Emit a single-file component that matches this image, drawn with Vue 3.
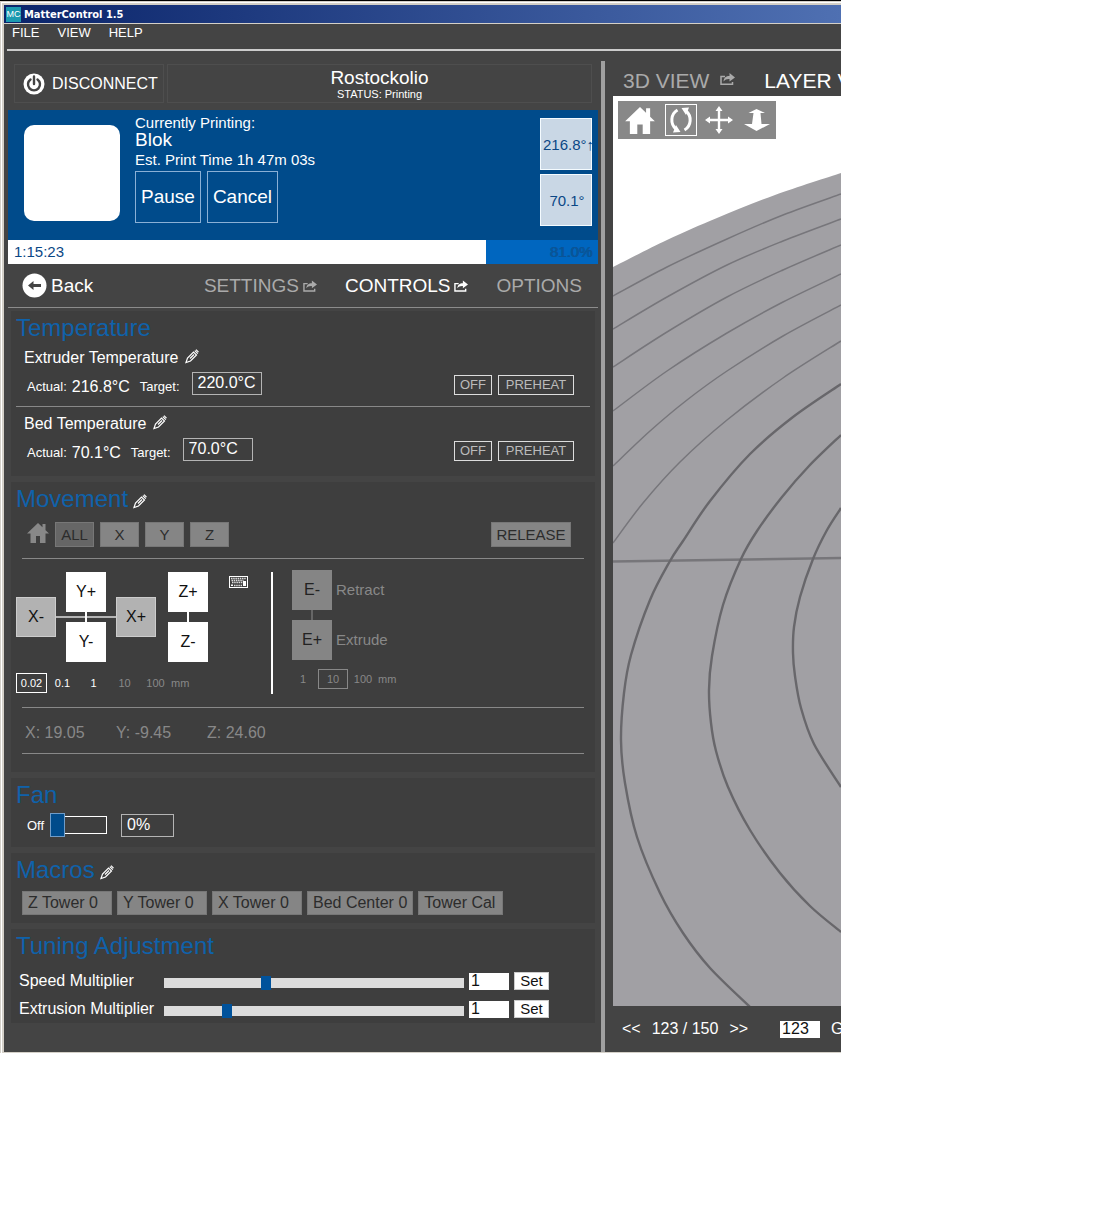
<script setup>
import { ref } from 'vue'

const temperatures = [
  { id: 'extruder', name: 'Extruder Temperature', actual: '216.8°C', target: '220.0°C' },
  { id: 'bed', name: 'Bed Temperature', actual: '70.1°C', target: '70.0°C' },
]
const axes = ['X', 'Y', 'Z']
const steps = [
  { label: '0.02' },
  { label: '0.1' },
  { label: '1' },
  { label: '10', disabled: true },
  { label: '100', disabled: true },
]
const step = ref('0.02')
const extrudeSteps = ['1', '10', '100']
const extrudeStep = ref('10')
const macros = ['Z Tower 0', 'Y Tower 0', 'X Tower 0', 'Bed Center 0', 'Tower Cal']
const tuning = ref([
  { id: 'speed', name: 'Speed Multiplier', position: 100, max: 300, value: '1' },
  { id: 'extrusion', name: 'Extrusion Multiplier', position: 60, max: 300, value: '1' },
])
const progress = 81

// Catmull-Rom curve through the given points
function smooth(points) {
  let d = `M${points[0][0]} ${points[0][1]}`
  for (let i = 0; i < points.length - 1; i++) {
    const p0 = points[i - 1] || points[i]
    const p1 = points[i]
    const p2 = points[i + 1]
    const p3 = points[i + 2] || p2
    const c1 = [p1[0] + (p2[0] - p0[0]) / 6, p1[1] + (p2[1] - p0[1]) / 6]
    const c2 = [p2[0] - (p3[0] - p1[0]) / 6, p2[1] - (p3[1] - p1[1]) / 6]
    d += `C${c1.join(' ')} ${c2.join(' ')} ${p2.join(' ')}`
  }
  return d
}

const bed = smooth([[0, 171], [54, 144], [104, 122], [162, 99], [228, 77]]) + 'V911H0Z'
const farRings = [
  [[0, 200], [54, 171], [114, 143], [170, 119], [228, 98]],
  [[0, 233], [54, 201], [114, 169], [170, 145], [228, 123]],
  [[0, 271], [54, 236], [114, 201], [170, 174], [228, 149]],
  [[0, 315], [54, 275], [114, 237], [170, 206], [228, 178]],
  [[0, 370], [37, 335], [74, 304], [114, 275], [170, 240], [228, 209]],
  [[0, 447], [30, 407], [67, 366], [114, 324], [170, 282], [228, 245]],
].map(smooth)
const nearRings = [
  [[228, 288], [180, 321], [137, 358], [97, 405], [70, 445], [57, 465], [37, 504], [18, 559], [11, 597], [8, 644], [12, 687], [24, 741], [47, 797], [70, 837], [97, 872], [137, 911]],
  [[228, 339], [196, 370], [169, 401], [144, 435], [128, 463], [110, 509], [99, 560], [96, 594], [98, 627], [103, 655], [115, 691], [137, 734], [167, 777], [197, 810], [228, 836]],
  [[228, 412], [214, 434], [200, 463], [187, 501], [181, 531], [180, 557], [182, 580], [188, 612], [201, 648], [228, 691]],
].map(smooth)

const pencilPath = 'M1 13.500L2.500 9L8.500 3L11.500 6L5.500 12ZM5 9.500L9 5.500M9.800 1.700L12.800 4.700M11 0.700L13.500 3.200'
const sharePath = 'M5 3.500H1V11.300H12.500V9'
const shareArrow = 'M3.500 8.500C4 4.500 6 3 9.500 3V0L15 4.500L9.500 8.500V6C7 5.800 5 6.500 3.500 8.500Z'
const homePath = 'M11 0L22 10.500H18.500V20H13V13H9V20H3.500V10.500H0ZM15.500 1H18.500V8L15.500 5Z'
</script>

<template>
  <div class="window">
    <header class="titlebar">
      <span class="logo">MC</span>
      <span>MatterControl 1.5</span>
    </header>
    <div class="client">
      <nav class="menu">
        <a href="#">FILE</a>
        <a href="#">VIEW</a>
        <a href="#">HELP</a>
      </nav>
      <div class="panes">
        <main class="left">
          <div class="connection">
            <button class="disconnect" type="button">
              <svg width="22" height="22" viewBox="0 0 22 22">
                <circle cx="11" cy="11" r="10.500" fill="#fff" />
                <path d="M7.500 6.500a6 6 0 1 0 7 0M11 3.500V11" fill="none" stroke="#444" stroke-width="2.400" stroke-linecap="round" />
              </svg>
              DISCONNECT
            </button>
            <div class="status">
              <div class="printer">Rostockolio</div>
              <div class="state">STATUS: Printing</div>
            </div>
          </div>

          <section class="job">
            <div class="thumb"></div>
            <div class="info">
              <div class="caption">Currently Printing:</div>
              <div class="part">Blok</div>
              <div class="estimate">Est. Print Time 1h 47m 03s</div>
              <div class="job-actions">
                <button type="button">Pause</button>
                <button type="button">Cancel</button>
              </div>
            </div>
            <div class="gauges">
              <button type="button">216.8°↑</button>
              <button type="button">70.1°</button>
            </div>
          </section>
          <div class="progress" role="progressbar" :aria-valuenow="progress" aria-valuemin="0" aria-valuemax="100">
            <div class="done" :style="{ width: progress + '%' }">1:15:23</div>
            <div class="percent">81.0%</div>
          </div>

          <nav class="tabs">
            <button class="back" type="button">
              <svg width="25" height="25" viewBox="0 0 25 25">
                <circle cx="12.500" cy="12.500" r="12" fill="#fff" />
                <path d="M6 12.500L11.500 8v3H19v3h-7.500v3z" fill="#444" />
              </svg>
              Back
            </button>
            <a href="#">SETTINGS
              <svg width="14" height="12" viewBox="0 0 15 12">
                <path :d="sharePath" fill="none" stroke="currentColor" stroke-width="1.500" />
                <path :d="shareArrow" fill="currentColor" />
              </svg>
            </a>
            <a href="#" class="active">CONTROLS
              <svg width="14" height="12" viewBox="0 0 15 12">
                <path :d="sharePath" fill="none" stroke="currentColor" stroke-width="1.500" />
                <path :d="shareArrow" fill="currentColor" />
              </svg>
            </a>
            <a href="#">OPTIONS</a>
          </nav>

          <div class="cards">
            <section class="card temperature">
              <h2>Temperature</h2>
              <div v-for="t in temperatures" :key="t.id" class="heater">
                <h3>
                  {{ t.name }}
                  <svg width="14" height="15" viewBox="0 0 14 15"><path :d="pencilPath" fill="none" stroke="#fff" stroke-width="1.200" /></svg>
                </h3>
                <div class="heater-row">
                  <span class="small">Actual:</span>
                  <span class="actual">{{ t.actual }}</span>
                  <label class="small target" :for="t.id">Target:</label>
                  <input :id="t.id" class="field degrees" type="text" :value="t.target" />
                  <button class="outline first" type="button">OFF</button>
                  <button class="outline" type="button">PREHEAT</button>
                </div>
              </div>
            </section>

            <section class="card movement">
              <h2>
                Movement
                <svg width="14" height="15" viewBox="0 0 14 15"><path :d="pencilPath" fill="none" stroke="#fff" stroke-width="1.200" /></svg>
              </h2>
              <div class="homing">
                <svg width="22" height="20" viewBox="0 0 22 20"><path :d="homePath" fill="#888" /></svg>
                <button class="grey all" type="button">ALL</button>
                <button v-for="a in axes" :key="a" class="grey" type="button">{{ a }}</button>
                <button class="grey release" type="button">RELEASE</button>
              </div>
              <div class="jog">
                <div class="jog-axes">
                  <div class="pads">
                    <div class="xy">
                      <i class="link-x"></i>
                      <i class="link-y"></i>
                      <button class="key x-minus" type="button">X-</button>
                      <button class="key y-plus" type="button">Y+</button>
                      <button class="key y-minus" type="button">Y-</button>
                      <button class="key x-plus" type="button">X+</button>
                    </div>
                    <div class="stack">
                      <button class="key" type="button">Z+</button>
                      <i></i>
                      <button class="key" type="button">Z-</button>
                    </div>
                    <svg class="keyboard" width="19" height="12" viewBox="0 0 19 12">
                      <rect x="0.500" y="0.500" width="18" height="11" fill="none" stroke="#fff" />
                      <path d="M2 2.500h15M2.500 4.500h12M3 6.500h11M5 9.500h8" stroke="#ddd" stroke-width="1.300" stroke-dasharray="1.500 0.700" />
                      <path d="M14 5h3v5h-3zM2 8.500h2v1.500H2z" fill="#fff" />
                    </svg>
                  </div>
                  <div class="steps">
                    <label v-for="s in steps" :key="s.label" :class="{ chosen: step === s.label, off: s.disabled }">
                      <input v-model="step" type="radio" name="step" :value="s.label" :disabled="s.disabled" />{{ s.label }}
                    </label>
                    <span class="unit">mm</span>
                  </div>
                </div>
                <div class="jog-extruder">
                  <div class="pads">
                    <div class="stack">
                      <button class="key" type="button">E-</button>
                      <i></i>
                      <button class="key" type="button">E+</button>
                    </div>
                    <div class="names">
                      <span>Retract</span>
                      <span>Extrude</span>
                    </div>
                  </div>
                  <div class="steps">
                    <label v-for="s in extrudeSteps" :key="s" :class="{ chosen: extrudeStep === s }">
                      <input v-model="extrudeStep" type="radio" name="extrude-step" :value="s" />{{ s }}
                    </label>
                    <span class="unit">mm</span>
                  </div>
                </div>
              </div>
              <div class="position">
                <span>X: 19.05</span>
                <span>Y: -9.45</span>
                <span>Z: 24.60</span>
              </div>
            </section>

            <section class="card fan">
              <h2>Fan</h2>
              <div class="fan-row">
                <label class="small" for="fan">Off</label>
                <input id="fan" class="toggle" type="range" min="0" max="100" value="0" />
                <input class="field speed" type="text" value="0%" aria-label="Fan speed" />
              </div>
            </section>

            <section class="card macros">
              <h2>
                Macros
                <svg width="14" height="15" viewBox="0 0 14 15"><path :d="pencilPath" fill="none" stroke="#fff" stroke-width="1.200" /></svg>
              </h2>
              <div class="macro-row">
                <button v-for="m in macros" :key="m" type="button">{{ m }}</button>
              </div>
            </section>

            <section class="card tuning">
              <h2>Tuning Adjustment</h2>
              <div v-for="t in tuning" :key="t.id" class="tuning-row">
                <label :for="t.id">{{ t.name }}</label>
                <input :id="t.id" v-model="t.position" class="slider" type="range" min="0" :max="t.max" />
                <input v-model="t.value" class="number" type="text" :aria-label="t.name + ' value'" />
                <button type="button">Set</button>
              </div>
            </section>
          </div>
        </main>

        <div class="divider"></div>

        <aside class="right">
          <nav class="views">
            <a href="#">3D VIEW
              <svg width="15" height="12" viewBox="0 0 15 12">
                <path :d="sharePath" fill="none" stroke="currentColor" stroke-width="1.500" />
                <path :d="shareArrow" fill="currentColor" />
              </svg>
            </a>
            <a href="#" class="active">LAYER VIEW</a>
          </nav>
          <div class="viewport">
            <svg class="scene" viewBox="0 0 228 911" preserveAspectRatio="xMinYMin slice">
              <path :d="bed" fill="#a1a0a4" />
              <path d="M0 465.500L228 462" stroke="#77767a" stroke-width="2.600" />
              <path v-for="r in farRings" :key="r" :d="r" fill="none" stroke="#77767b" stroke-width="1.500" />
              <path v-for="r in nearRings" :key="r" :d="r" fill="none" stroke="#68676b" stroke-width="2.400" />
            </svg>
            <div class="tools">
              <button type="button" aria-label="Reset view">
                <svg width="30" height="27" viewBox="0 0 22 20"><path :d="homePath" fill="#fff" /></svg>
              </button>
              <button type="button" class="selected" aria-label="Rotate">
                <svg width="24" height="26" viewBox="0 0 24 26">
                  <path d="M8.500 3C1.500 7 1 17 7 22M15.500 23C22.500 19 23 9 17 4" fill="none" stroke="#fff" stroke-width="3" />
                  <path d="M12.500 1L20 0.500L17 8ZM11.500 25L4 25.500L7 18Z" fill="#fff" />
                </svg>
              </button>
              <button type="button" aria-label="Pan">
                <svg width="28" height="28" viewBox="0 0 28 28">
                  <path d="M14 3V25M3 14H25" stroke="#fff" stroke-width="2.400" />
                  <path d="M14 0l3.500 5h-7zM14 28l3.500-5h-7zM0 14l5-3.500v7zM28 14l-5-3.500v7z" fill="#fff" />
                </svg>
              </button>
              <button type="button" aria-label="Zoom">
                <svg width="26" height="22" viewBox="0 0 26 22">
                  <path d="M12.500 0L21 4H16.500L17.500 15H26L12.500 22L0 15H8L9.500 4H4.500Z" fill="#fff" />
                </svg>
              </button>
            </div>
          </div>
          <footer class="layers">
            <button type="button">&lt;&lt;</button>
            <span>123 / 150</span>
            <button type="button">&gt;&gt;</button>
            <input type="text" value="123" aria-label="Layer" />
            <button type="button">Go</button>
          </footer>
        </aside>
      </div>
    </div>
  </div>
</template>

<style>
body {
  margin: 0;
  background: #fff;
}
</style>

<style scoped>
* {
  box-sizing: border-box;
}
.window {
  margin-right: 259px;
  padding: 4px 0 1px 4px;
  border-top: 1px solid #000;
  background: #d4d0c8;
  box-shadow: inset 1px 1px 0 #d4d0c8, inset 2px 2px 0 #fff;
  font-family: "Liberation Sans", Arial, sans-serif;
  color: #fff;
  overflow: hidden;
}
button,
input {
  margin: 0;
  padding: 0;
  border: 0;
  border-radius: 0;
  background: none;
  color: inherit;
  font: inherit;
}
button {
  white-space: nowrap;
}
a {
  color: inherit;
  text-decoration: none;
}
svg {
  display: block;
  flex: none;
}
h2,
h3 {
  display: flex;
  align-items: center;
  margin: 0;
  font-weight: normal;
}
.titlebar {
  display: flex;
  align-items: center;
  gap: 3px;
  height: 18px;
  padding-left: 2px;
  background: linear-gradient(90deg, #0a246a, #4f70b2);
  font: bold 11px "DejaVu Sans Condensed", "DejaVu Sans", sans-serif;
}
.logo {
  width: 15px;
  background: #1c9ab0;
  font: 9px/15px "Liberation Sans", sans-serif;
  text-align: center;
}
.client {
  margin-top: 1px;
  background: #444;
}
.menu {
  display: flex;
  gap: 18px;
  height: 27px;
  margin-left: 3px;
  padding-left: 5px;
  border-bottom: 2px solid #ccc;
  font-size: 13px;
  line-height: 18px;
}
.panes {
  display: grid;
  grid-template-columns: minmax(0, 597fr) 4px minmax(0, 236fr);
}
.left {
  padding: 13px 3px 29px 4px;
}
.connection {
  display: flex;
  gap: 3px;
  margin: 0 6px 7px;
}
.disconnect {
  display: flex;
  align-items: center;
  gap: 7px;
  width: 150px;
  height: 39px;
  padding-left: 8px;
  border: 1px solid #4e4e4e;
  font-size: 16px;
}
.status {
  flex: 1;
  border: 1px solid #4e4e4e;
  text-align: center;
}
.printer {
  padding-top: 3px;
  font-size: 19px;
  line-height: 20px;
}
.state {
  font-size: 11px;
  line-height: 12px;
}
.job {
  display: flex;
  height: 130px;
  padding: 0 6px 0 16px;
  background: #004b8b;
}
.thumb {
  width: 96px;
  height: 96px;
  margin-top: 15px;
  border-radius: 10px;
  background: #fff;
}
.info {
  margin: 5px 0 0 15px;
  font-size: 15px;
  line-height: 18px;
}
.caption {
  line-height: 16px;
}
.part {
  font-size: 19px;
}
.estimate {
  margin: 2px 0;
}
.job-actions {
  display: flex;
  gap: 6px;
}
.job-actions button {
  height: 52px;
  padding: 0 5px;
  border: 1px solid #8ab0d6;
  font-size: 19px;
}
.gauges {
  display: flex;
  flex-direction: column;
  gap: 4px;
  margin: 8px 0 0 auto;
}
.gauges button {
  width: 52px;
  height: 52px;
  padding-left: 2px;
  border: 1px solid #f4fbff;
  background: #c9d7e5;
  color: #0b4785;
  font-size: 15px;
}
.progress {
  display: flex;
  justify-content: space-between;
  background: #0066bf;
  font-size: 15px;
  line-height: 24px;
}
.progress .done {
  background: #fff;
  color: #0b4785;
  text-indent: 6px;
}
.percent {
  padding-right: 6px;
  color: #0a5496;
  text-shadow: 1px 0 0 #0a5496;
}
.tabs {
  display: flex;
  align-items: center;
  gap: 28px;
  height: 44px;
  padding: 0 16px 0 14px;
  border-bottom: 1px solid #8c8c8c;
  color: #aaa;
  font-size: 19px;
}
.tabs a,
.views a {
  display: flex;
  align-items: center;
  gap: 4px;
}
.tabs .active,
.views .active {
  color: #fff;
}
.back {
  display: flex;
  align-items: center;
  gap: 4px;
  margin-right: auto;
  color: #fff;
}
.cards {
  display: flex;
  flex-direction: column;
  gap: 6px;
  padding: 3px 3px 0;
}
.card {
  padding: 3px 0 0 5px;
  background: #3e3e3e;
}
h2 {
  gap: 5px;
  height: 28px;
  color: #0f62ab;
  font-size: 24px;
}
h2 svg {
  margin-top: 5px;
}
.small {
  font-size: 13px;
}
.heater {
  margin-right: 5px;
  padding: 5px 0 11px;
}
.heater + .heater {
  padding: 6px 0 15px;
  border-top: 1px solid #888;
}
h3 {
  gap: 7px;
  height: 22px;
  padding-left: 8px;
  font-size: 16px;
}
h3 svg {
  margin-bottom: 3px;
}
.heater-row {
  display: flex;
  align-items: flex-end;
  height: 26px;
  padding: 0 16px 0 11px;
  line-height: 16px;
}
.actual {
  margin: 0 10px 0 5px;
}
.target {
  margin-right: 12px;
}
.field {
  height: 23px;
  padding: 0 5px;
  border: 1px solid #b4b4b4;
  font-size: 16px;
}
.degrees {
  width: 70px;
  padding-bottom: 1px;
}
.outline {
  width: 76px;
  height: 20px;
  margin-left: 6px;
  border: 1px solid #ddd;
  color: #bbb;
  font-size: 13px;
}
.outline.first {
  width: 38px;
  margin-left: auto;
}
.homing {
  display: flex;
  gap: 6px;
  margin: 9px 11px 0 6px;
  padding: 0 13px 11px 5px;
  border-bottom: 1px solid #888;
}
.grey {
  width: 39px;
  height: 25px;
  border: 1px solid #777;
  background: #858585;
  color: #2c2c2c;
  font-size: 15px;
}
.all {
  background: #666;
  border-color: #777;
}
.release {
  width: 80px;
  margin-left: auto;
}
.homing svg {
  margin-top: 1px;
}
.jog {
  display: flex;
  padding: 11px 0 13px;
}
.jog-axes {
  width: 257px;
  height: 122px;
  margin-top: 2px;
  border-right: 2px solid #fff;
}
.jog-extruder {
  padding-left: 19px;
  color: #888;
}
.pads {
  display: flex;
}
.xy {
  display: grid;
  grid-template: 40px 40px / 40px 40px 40px;
  gap: 10px;
}
.key {
  width: 40px;
  height: 40px;
  background: #fff;
  color: #111;
  font-size: 16px;
}
.link-x {
  grid-area: 1 / 1 / 3 / 4;
  align-self: center;
  height: 2px;
  background: #b4b4b4;
}
.link-y {
  grid-area: 1 / 2 / 3 / 3;
  justify-self: center;
  width: 2px;
  background: #fff;
}
.x-minus,
.x-plus {
  align-self: center;
  border: 1px solid #ccc;
  background: #b2b2b2;
}
.x-minus {
  grid-area: 1 / 1 / 3 / 2;
}
.x-plus {
  grid-area: 1 / 3 / 3 / 4;
}
.y-plus {
  grid-area: 1 / 2;
}
.y-minus {
  grid-area: 2 / 2;
}
.stack {
  display: flex;
  flex-direction: column;
  align-items: center;
}
.stack i {
  width: 2px;
  height: 10px;
  background: #fff;
}
.jog-axes .stack {
  margin-left: 12px;
}
.keyboard {
  margin: 4px 0 0 21px;
}
.jog-extruder .key {
  background: #858585;
  color: #222;
}
.jog-extruder .stack i {
  background: #666;
}
.names {
  display: flex;
  flex-direction: column;
  gap: 10px;
  margin-left: 4px;
  font-size: 15px;
  line-height: 40px;
}
.steps {
  display: flex;
  margin-top: 11px;
  font-size: 11px;
  line-height: 18px;
}
.jog-extruder .steps {
  margin: 9px 0 0 -4px;
}
.steps label {
  width: 31px;
  border: 1px solid transparent;
  text-align: center;
}
.jog-extruder .steps label {
  width: 30px;
}
.steps .chosen {
  border-color: currentColor;
}
.steps input {
  position: absolute;
  opacity: 0;
  pointer-events: none;
}
.steps .off,
.steps .unit {
  color: #888;
}
.unit {
  padding-top: 1px;
}
.position {
  display: flex;
  margin: 0 11px 18px 6px;
  padding: 4px 0 0 3px;
  border: solid #888;
  border-width: 1px 0;
  color: #888;
  font-size: 16px;
  line-height: 41px;
}
.position span {
  width: 91px;
}
.fan-row {
  display: flex;
  align-items: center;
  height: 24px;
  margin: 4px 0 10px;
  padding-left: 11px;
}
.toggle {
  width: 57px;
  height: 18px;
  margin: 0 14px 0 6px;
  border: 1px solid #fff;
  appearance: none;
}
.toggle::-webkit-slider-thumb {
  width: 15px;
  height: 24px;
  margin-left: -1px;
  border: 1px solid #6f9cc8;
  background: #004b8b;
  appearance: none;
}
.speed {
  width: 53px;
}
.macro-row {
  display: flex;
  flex-wrap: wrap;
  gap: 5px;
  margin: 7px 0 8px 6px;
}
.macro-row button {
  min-width: 85px;
  height: 24px;
  padding: 0 5px;
  border: 1px solid #777;
  background: #858585;
  color: #2c2c2c;
  font-size: 16px;
  text-align: left;
}
.macro-row button:nth-child(-n + 3) {
  width: 90px;
}
.tuning {
  padding-bottom: 5px;
}
.tuning-row {
  display: flex;
  align-items: center;
  height: 18px;
  margin-top: 10px;
  padding-left: 3px;
  font-size: 16px;
  line-height: 18px;
}
.tuning h2 + .tuning-row {
  margin-top: 12px;
}
.tuning-row label {
  width: 145px;
}
.slider {
  width: 300px;
  height: 10px;
  margin-top: 4px;
  background: #dcdcdc;
  appearance: none;
}
.slider::-webkit-slider-thumb {
  width: 10px;
  height: 14px;
  background: #00529b;
  appearance: none;
}
.number {
  width: 40px;
  height: 17px;
  margin: 0 5px;
  padding: 0 2px;
  background: #fff;
  color: #111;
}
.tuning-row button {
  width: 35px;
  height: 18px;
  border: 1px solid #ccc;
  background: #fff;
  color: #111;
  font-size: 15px;
  line-height: 16px;
}
.divider {
  margin-top: 10px;
  background: #a0a0a0;
}
.right {
  display: flex;
  flex-direction: column;
  padding-left: 8px;
  overflow: hidden;
}
.views {
  display: flex;
  align-items: center;
  gap: 29px;
  height: 45px;
  padding: 14px 0 0 10px;
  color: #aaa;
  font-size: 21px;
  white-space: nowrap;
}
.views a {
  flex: none;
}
.views a:first-child {
  gap: 11px;
}
.views svg {
  margin-top: -3px;
}
.viewport {
  position: relative;
  flex: 1;
  background: #fff;
}
.scene {
  position: absolute;
  width: 100%;
  height: 100%;
}
.tools {
  position: absolute;
  top: 5px;
  left: 5px;
  display: flex;
  align-items: center;
  gap: 6px;
  height: 38px;
  padding: 0 3px;
  background: #888;
}
.tools button {
  display: flex;
  align-items: center;
  justify-content: center;
  width: 32px;
  height: 32px;
  padding: 0;
}
.tools button:first-child {
  width: 38px;
}
.tools .selected {
  border: 1px solid #fff;
}
.layers {
  display: flex;
  align-items: center;
  height: 46px;
  padding-left: 9px;
  font-size: 16px;
  white-space: nowrap;
}
.layers span {
  margin: 0 11px;
}
.layers input {
  flex: none;
  width: 40px;
  height: 17px;
  margin: 0 11px 0 32px;
  padding: 0 2px;
  background: #fff;
  color: #111;
}
</style>
